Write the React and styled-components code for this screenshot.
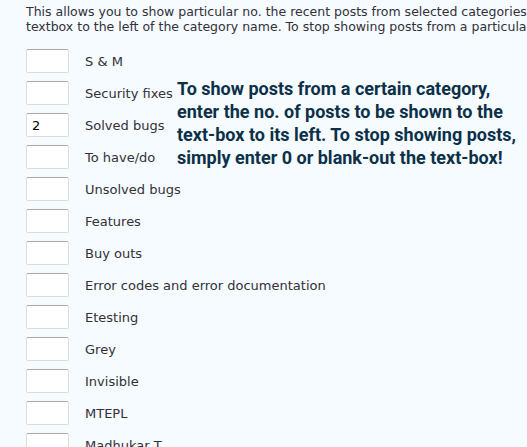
import React from "react";
import styled, { createGlobalStyle } from "styled-components";

const Global = createGlobalStyle`
  html, body { margin: 0; padding: 0; background: #f5fbff; }
  body { font-family: "DejaVu Sans", Verdana, sans-serif; overflow: hidden; }
`;

const Page = styled.div`
  position: relative;
  width: 527px;
  height: 447px;
  overflow: hidden;
  padding: 4px 0 0 26px;
  box-sizing: border-box;
  color: #333038;
`;

const Intro = styled.p`
  margin: 0 0 15px 0;
  font-size: 12.5px;
  line-height: 15px;
  white-space: nowrap;
`;

const List = styled.div`
  display: flex;
  flex-direction: column;
  gap: 8px;
`;

const Row = styled.label`
  display: flex;
  align-items: center;
  gap: 16px;
  height: 24px;
  font-size: 13px;
`;

const Box = styled.input`
  box-sizing: border-box;
  width: 43px;
  height: 24px;
  margin: 0;
  padding: 2px 5px;
  border: 1px solid #dcdcdc;
  border-top-color: #ababab;
  border-radius: 2px;
  background: #fff;
  font-family: "DejaVu Sans", Verdana, sans-serif;
  font-size: 13px;
  color: #000;
  outline: none;
`;

const Note = styled.div`
  position: absolute;
  left: 177px;
  top: 77px;
  font-family: Roboto, "Open Sans", sans-serif;
  font-weight: 700;
  font-size: 18px;
  line-height: 23px;
  color: #0c3048;
  white-space: nowrap;
`;

const categories = [
  ["S & M", ""],
  ["Security fixes", ""],
  ["Solved bugs", "2"],
  ["To have/do", ""],
  ["Unsolved bugs", ""],
  ["Features", ""],
  ["Buy outs", ""],
  ["Error codes and error documentation", ""],
  ["Etesting", ""],
  ["Grey", ""],
  ["Invisible", ""],
  ["MTEPL", ""],
  ["Madhukar T", ""],
];

export default function App() {
  return (
    <>
      <Global />
      <Page>
        <Intro>
          This allows you to show particular no. the recent posts from selected categories
          <br />
          textbox to the left of the category name. To stop showing posts from a particular category
        </Intro>
        <List>
          {categories.map(([name, val]) => (
            <Row key={name}>
              <Box type="text" defaultValue={val} />
              <span>{name}</span>
            </Row>
          ))}
        </List>
        <Note>
          To show posts from a certain category,
          <br />
          enter the no. of posts to be shown to the
          <br />
          text-box to its left. To stop showing posts,
          <br />
          simply enter 0 or blank-out the text-box!
        </Note>
      </Page>
    </>
  );
}
